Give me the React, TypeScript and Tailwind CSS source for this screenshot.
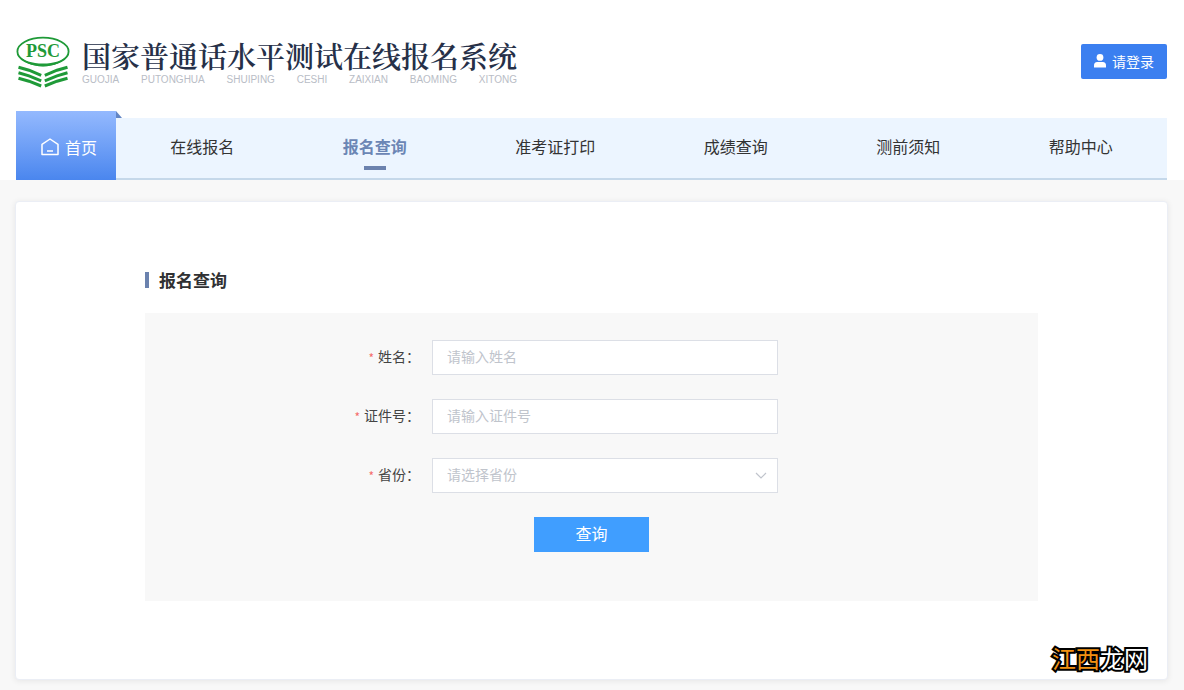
import { useState } from 'react';

const navItems = ['在线报名', '报名查询', '准考证打印', '成绩查询', '测前须知', '帮助中心'];
const pinyin = ['GUOJIA', 'PUTONGHUA', 'SHUIPING', 'CESHI', 'ZAIXIAN', 'BAOMING', 'XITONG'];
const provinces = ['江西', '北京', '上海', '广东', '浙江'];

function Logo() {
  return (
    <svg width="54" height="52" viewBox="0 0 54 52" aria-hidden="true">
      <ellipse cx="27" cy="15.5" rx="25.6" ry="13.8" fill="#fff" stroke="#1f9a38" strokeWidth="1.8" />
      <path d="M2 19C6 26 16 30.4 27 30.4S48 26 52 19C47 24.6 38 27.6 27 27.6S7 24.6 2 19Z" fill="#1f9a38" />
      <text
        x="27"
        y="21"
        textAnchor="middle"
        fontFamily="Liberation Serif, serif"
        fontWeight="700"
        fontSize="18"
        fill="#1f9a38"
      >
        PSC
      </text>
      <g fill="none" stroke="#1f9a38" strokeWidth="3">
        <path d="M2.5 31.2L13 34.2L25.2 39.4M2.5 36.8L13 39.8L25.2 44.8M2.5 42.2L13 45.2L25.2 50" />
        <path d="M51.5 31.2L41 34.2L28.8 39.4M51.5 36.8L41 39.8L28.8 44.8M51.5 42.2L41 45.2L28.8 50" />
      </g>
    </svg>
  );
}

function HomeIcon() {
  return (
    <svg width="18" height="18" viewBox="0 0 18 18" fill="none" stroke="#fff" strokeWidth="1.5" strokeLinejoin="round" aria-hidden="true">
      <path d="M1 6.4L9 1L17 6.4V16.6H1Z" />
      <path d="M6 13H12" />
    </svg>
  );
}

function UserIcon() {
  return (
    <svg width="12" height="14" viewBox="0 0 12 14" fill="#fff" aria-hidden="true">
      <circle cx="6" cy="3.4" r="3.4" />
      <path d="M0 13.4V11.5Q0 8.2 3.2 8H8.8Q12 8.2 12 11.5V13.4Z" />
    </svg>
  );
}

function FieldLabel({ id, text }: { id: string; text: string }) {
  return (
    <label htmlFor={id} className="flex justify-end gap-1 pr-3 text-sm text-[#444]">
      <span className="text-xs leading-6 text-[#f56c6c]">*</span>
      <span>{text}：</span>
    </label>
  );
}

const rowClass = 'grid grid-cols-[1fr_346px_1fr] items-center pl-[27px]';
const controlClass =
  'h-[35px] w-full border border-[#dcdfe6] bg-white px-3.5 pb-1 text-sm outline-none placeholder:text-[#c0c4cc] focus:border-[#409eff]';

export default function App() {
  const [province, setProvince] = useState('');
  return (
    <div className="relative min-h-screen bg-[#f8f8f8] pb-2.5 font-['Noto_Sans_CJK_SC',sans-serif] text-[#333]">
      <header className="bg-white pt-9 pr-[17px] pl-4">
        <div className="flex items-start justify-between">
          <div className="flex items-start gap-3">
            <Logo />
            <div className="pt-1">
              <h1 className="text-[29px] leading-8 font-semibold whitespace-nowrap text-[#263048] font-['Noto_Serif_CJK_SC','Noto_Sans_CJK_SC',serif]">
                国家普通话水平测试在线报名系统
              </h1>
              <p className="flex justify-between pt-0.5 font-['Liberation_Sans',sans-serif] text-[10px] leading-3 text-[#b9bdc6]">
                {pinyin.map((word) => (
                  <span key={word}>{word}</span>
                ))}
              </p>
            </div>
          </div>
          <button type="button" className="mt-2 flex h-[35px] items-center gap-1.5 rounded-xs bg-[#3b7ff0] px-[13px] pb-0.5 text-sm text-white">
            <UserIcon />
            请登录
          </button>
        </div>
        <nav className="mt-[23px] flex items-end">
          <a
            href="#home"
            className="relative flex h-[69px] w-[100px] items-center justify-center gap-1.5 bg-linear-to-b from-[#94b9fe] to-[#4a86ee] pt-0.5 pl-1.5 text-base text-white"
          >
            <HomeIcon />
            首页
            <svg className="absolute top-0 left-full" width="6" height="7" viewBox="0 0 6 7" aria-hidden="true">
              <path d="M0 0L6 7H0Z" fill="#6285c4" />
            </svg>
          </a>
          <div className="flex h-[62px] flex-1 border-b-2 border-[#c5d8ea] bg-[#ecf5ff]">
            {navItems.map((item) => {
              const active = item === '报名查询';
              return (
                <a
                  key={item}
                  href={`#${item}`}
                  aria-current={active ? 'page' : undefined}
                  className="flex flex-auto flex-col items-center pt-4 text-base leading-6 whitespace-nowrap"
                >
                  <span className={active ? 'font-bold text-[#6b86b5]' : 'text-[#333]'}>{item}</span>
                  {active && <span className="mt-2 h-1 w-[22px] bg-[#6b82ae]" />}
                </a>
              );
            })}
          </div>
        </nav>
      </header>

      <main className="mt-[21px] mr-4 ml-[15px] rounded-sm border border-[#ebeef5] bg-white px-[129px] pt-[62px] pb-[78px] shadow-[0_1px_6px_rgba(0,0,0,0.08)]">
        <h2 className="flex items-center gap-2.5 text-[17px] leading-8 font-bold text-[#303133]">
          <span className="h-4 w-1 bg-[#6b82ae]" />
          报名查询
        </h2>
        <form
          className="mt-[17px] flex flex-col gap-6 bg-[#f8f8f8] pt-[27px] pb-[49px]"
          onSubmit={(e) => e.preventDefault()}
        >
          <div className={rowClass}>
            <FieldLabel id="name" text="姓名" />
            <input id="name" type="text" placeholder="请输入姓名" className={controlClass} />
          </div>
          <div className={rowClass}>
            <FieldLabel id="idno" text="证件号" />
            <input id="idno" type="text" placeholder="请输入证件号" className={controlClass} />
          </div>
          <div className={rowClass}>
            <FieldLabel id="province" text="省份" />
            <div className="relative">
              <select
                id="province"
                value={province}
                onChange={(e) => setProvince(e.target.value)}
                className={`${controlClass} appearance-none ${province ? 'text-[#333]' : 'text-[#c0c4cc]'}`}
              >
                <option value="">请选择省份</option>
                {provinces.map((p) => (
                  <option key={p}>{p}</option>
                ))}
              </select>
              <svg
                className="pointer-events-none absolute top-3.5 right-[11px]"
                width="12"
                height="8"
                viewBox="0 0 12 8"
                fill="none"
                stroke="#c0c4cc"
                strokeWidth="1.2"
                aria-hidden="true"
              >
                <path d="M1 1L6 6L11 1" />
              </svg>
            </div>
          </div>
          <button type="submit" className="h-[35px] w-[115px] self-center bg-[#409eff] pb-1 text-base leading-6 text-white">
            查询
          </button>
        </form>
      </main>

      <div className="absolute right-9 bottom-3.5 text-2xl leading-9 font-normal [paint-order:stroke_fill] [-webkit-text-stroke:4px_#000]">
        <span className="text-[#f29111]">江西</span>
        <span className="text-white">龙网</span>
      </div>
    </div>
  );
}
